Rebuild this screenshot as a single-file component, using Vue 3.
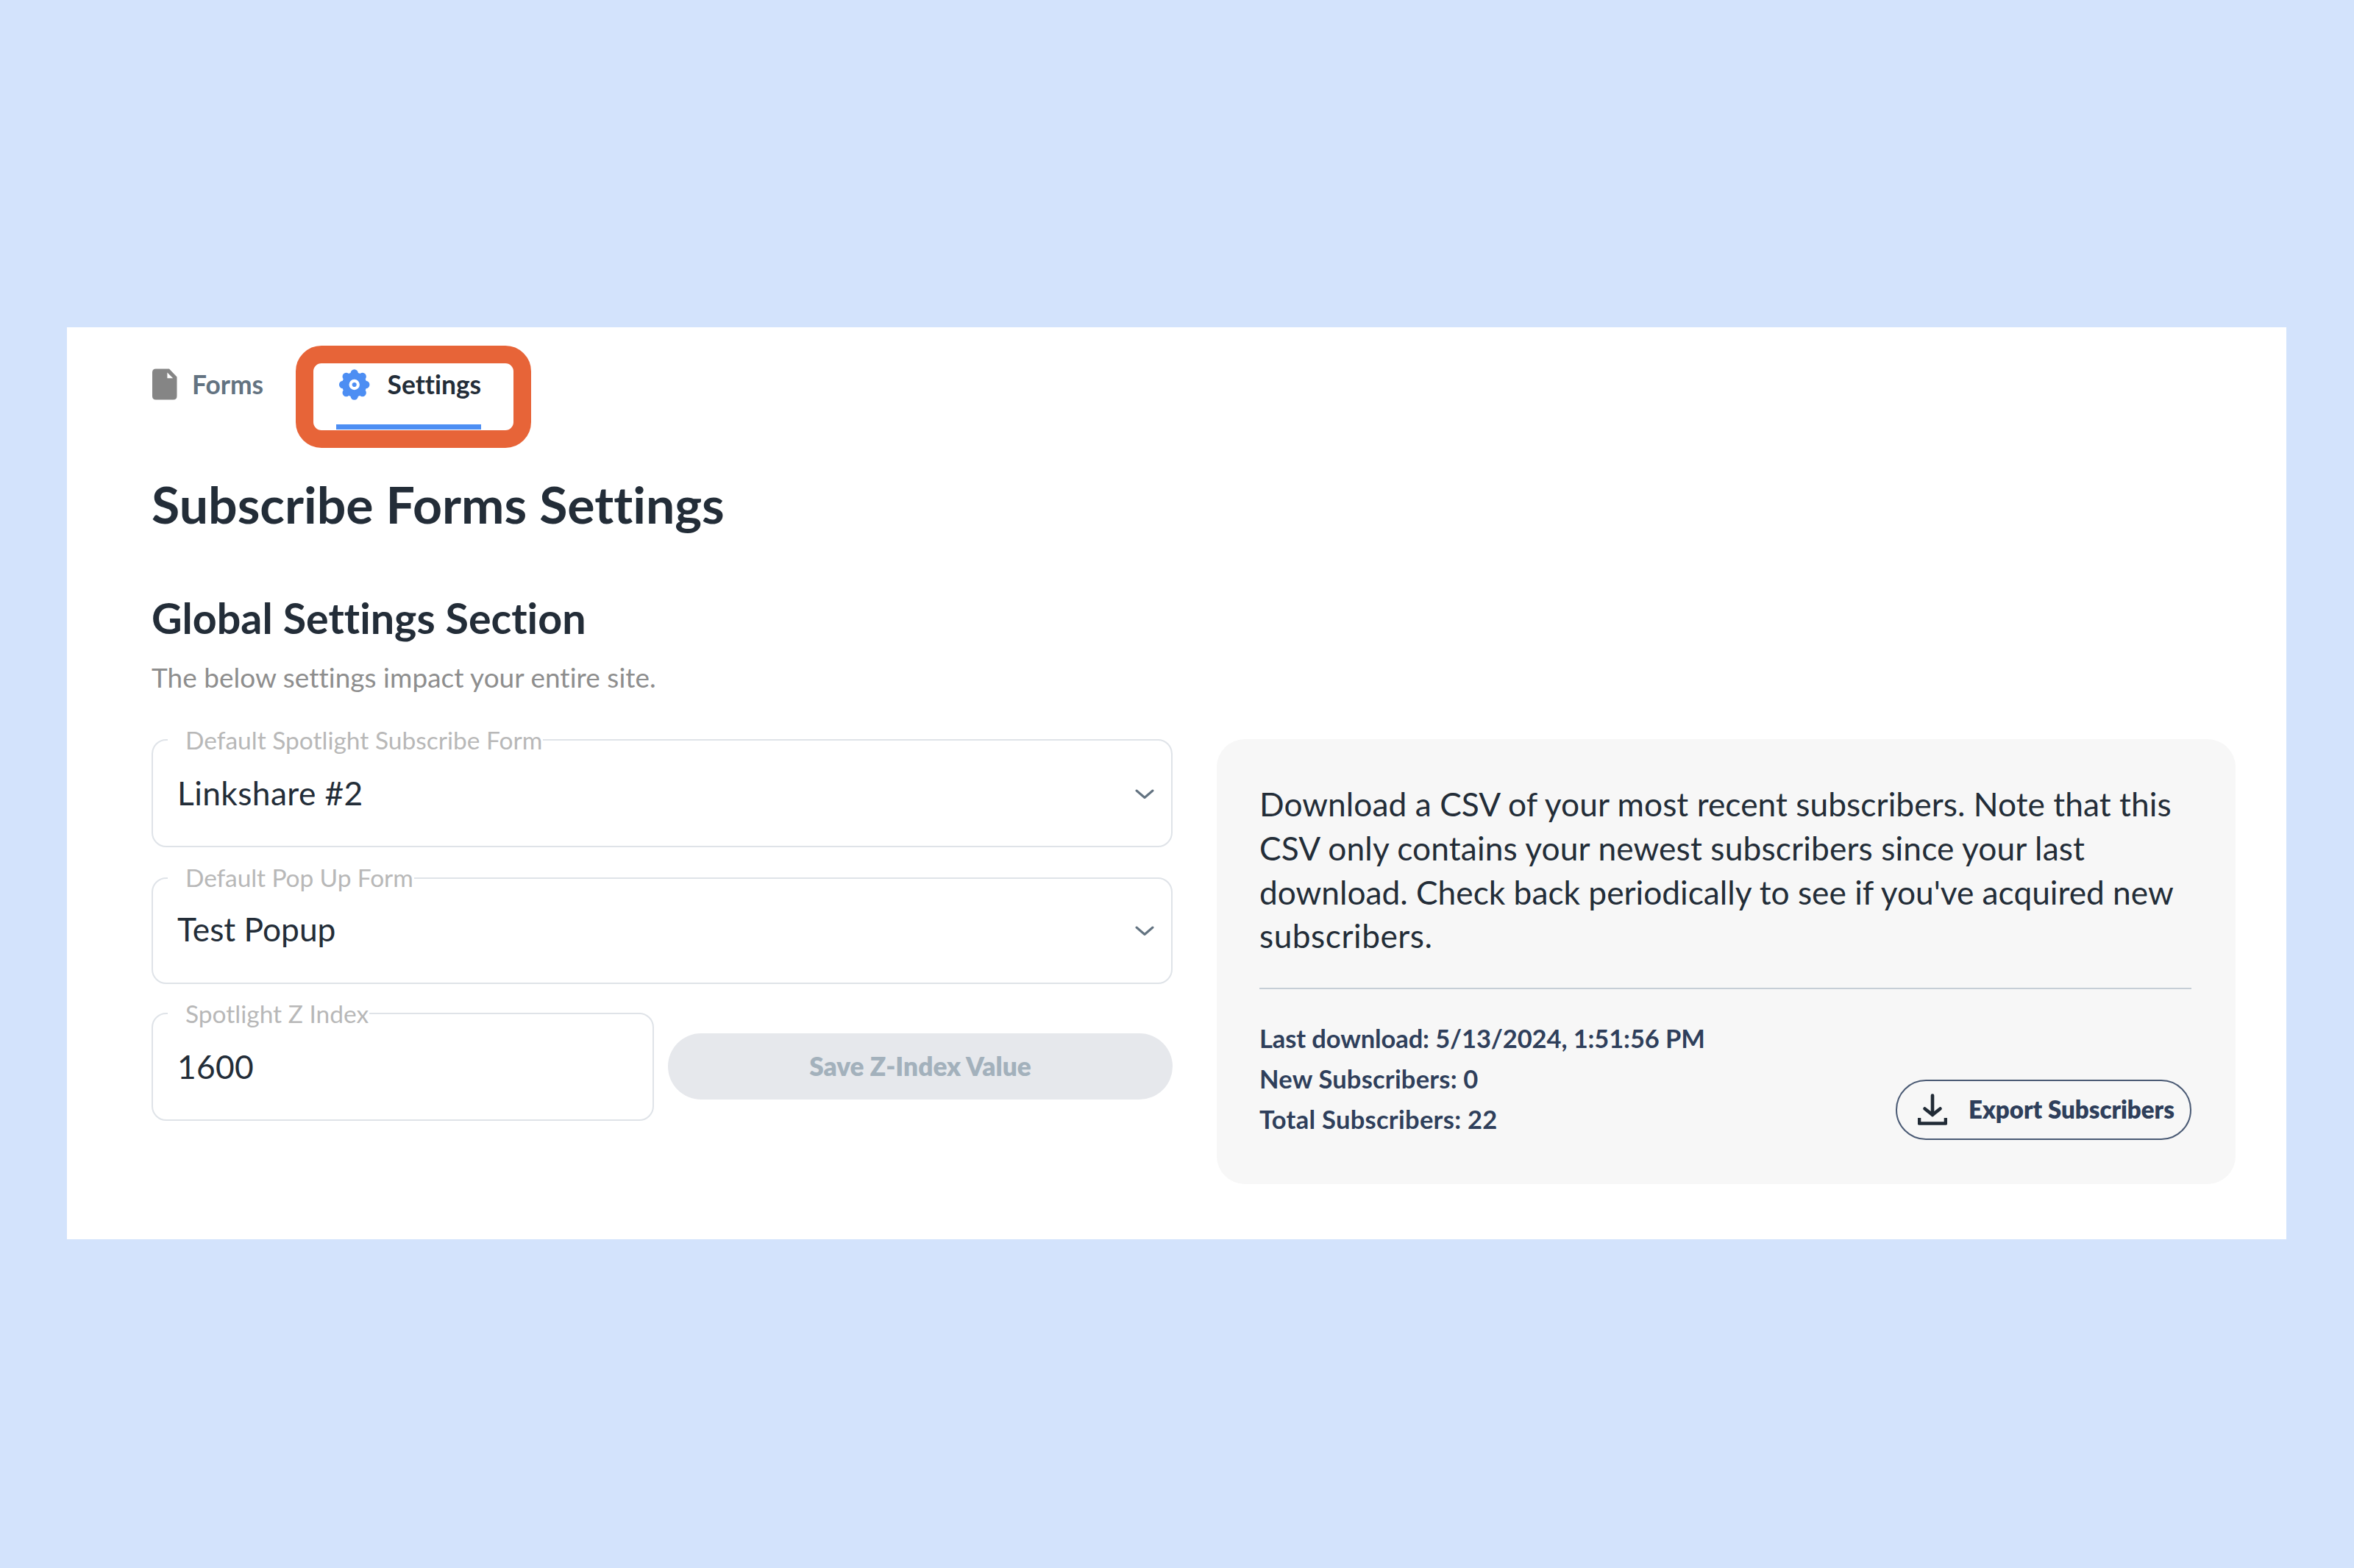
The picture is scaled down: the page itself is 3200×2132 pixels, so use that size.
<script setup>
const stats = [
  { text: 'Last download: 5/13/2024, 1:51:56 PM', tracking: -0.11 },
  { text: 'New Subscribers: 0', tracking: 0.2 },
  { text: 'Total Subscribers: 22', tracking: 0.28 },
]
const about = [
  { text: 'Download a CSV of your most recent subscribers. Note that this', tracking: 0.06 },
  { text: 'CSV only contains your newest subscribers since your last', tracking: 0.14 },
  { text: "download. Check back periodically to see if you've acquired new", tracking: 0 },
  { text: 'subscribers.', tracking: 0.5 },
]
const selects = [
  { label: 'Default Spotlight Subscribe Form', value: 'Linkshare #2', kind: 'spotlight' },
  { label: 'Default Pop Up Form', value: 'Test Popup', kind: 'popup' },
]
const angles = [0, 45, 90, 135, 180, 225, 270, 315]
</script>

<template>
  <div class="page">
    <main class="panel">
      <nav class="tabs">
        <a class="tab">
          <svg class="doc" width="34" height="43" viewBox="0 0 34 43">
            <path
              fill="#858585"
              fill-rule="evenodd"
              d="M5 0.5H23L33.5 11.5V37.5Q33.5 42.5 28.5 42.5H5Q0 42.5 0 37.5V5.5Q0 0.5 5 0.5ZM20.4 5.5V13.2H28.2Z"
            />
          </svg>
          <span>Forms</span>
        </a>
        <a class="tab active">
          <svg class="gear" width="44" height="44" viewBox="-22 -22 44 44">
            <g stroke="#4d8ef3" stroke-width="10.5" stroke-linecap="round">
              <line v-for="a in angles" :key="a" x1="0" y1="-10" x2="0" y2="-15.8" :transform="`rotate(${a})`" />
            </g>
            <circle r="17" fill="#4d8ef3" />
            <circle r="5.2" fill="none" stroke="#fff" stroke-width="4.2" />
          </svg>
          <span>Settings</span>
          <i class="highlight"></i>
        </a>
      </nav>

      <h1>Subscribe Forms Settings</h1>
      <h2>Global Settings Section</h2>
      <p class="hint">The below settings impact your entire site.</p>

      <div class="columns">
        <section class="fields">
          <div v-for="s in selects" :key="s.kind" class="field" :class="s.kind">
            <label>{{ s.label }}</label>
            <span class="value">{{ s.value }}</span>
            <svg class="chevron" width="26" height="15" viewBox="0 0 26 15">
              <path d="M2 2L13 11.5L24 2" fill="none" stroke="#637381" stroke-width="3" stroke-linecap="round" stroke-linejoin="round" />
            </svg>
          </div>
          <div class="zrow">
            <div class="field zindex">
              <label>Spotlight Z Index</label>
              <span class="value">1600</span>
            </div>
            <button class="save">Save Z-Index Value</button>
          </div>
        </section>

        <section class="card">
          <div class="about">
            <div v-for="line in about" :key="line.text" :style="{ letterSpacing: line.tracking + 'px' }">{{ line.text }}</div>
          </div>
          <hr />
          <div class="summary">
            <div class="stats">
              <div v-for="line in stats" :key="line.text" :style="{ letterSpacing: line.tracking + 'px' }">{{ line.text }}</div>
            </div>
            <button class="export">
              <svg width="40" height="44" viewBox="0 0 40 44">
                <g fill="none" stroke="#212b36">
                  <path d="M20 2.5V29M9.5 20.5L20 28.8L30.5 20.5" stroke-width="4.6" stroke-linecap="round" />
                  <path d="M2 33V40.5H38V33" stroke-width="4.6" stroke-linejoin="round" />
                </g>
              </svg>
              <span>Export Subscribers</span>
            </button>
          </div>
        </section>
      </div>
    </main>
  </div>
</template>

<style>
body {
  margin: 0;
}
</style>

<style scoped>
.page {
  box-sizing: border-box;
  width: 3200px;
  height: 2132px;
  padding: 445px 92px 0 91px;
  background: #d3e3fc;
  font-family: Lato, sans-serif;
  font-variant-ligatures: none;
  color: #232d38;
  overflow: hidden;
}
.panel {
  box-sizing: border-box;
  height: 1240px;
  padding: 47px 69px 0 115px;
  background: #fff;
}
.tabs {
  display: flex;
  gap: 100px;
  height: 92px;
}
.tab {
  position: relative;
  box-sizing: border-box;
  display: flex;
  align-items: flex-start;
  font-size: 35.4px;
  font-weight: 700;
  line-height: 62px;
  color: #637381;
}
.tab .doc {
  margin: 9px 20px 0 1px;
}
.tab .gear {
  margin: 9px 23px 0 3px;
}
.tab.active {
  width: 197px;
  margin-left: -1px;
  color: #232d38;
  border-bottom: 7px solid #4d8ef3;
}
.highlight {
  position: absolute;
  left: -55px;
  top: -22px;
  box-sizing: border-box;
  width: 320px;
  height: 139px;
  border: 24px solid #e76438;
  border-radius: 35px;
}
h1 {
  margin: 59px 0 0;
  font-size: 69.8px;
  line-height: 84px;
  font-weight: 700;
}
h2 {
  margin: 78px 0 0;
  font-size: 57.4px;
  line-height: 70px;
  font-weight: 700;
}
.hint {
  margin: 24px 0 0;
  font-size: 36.9px;
  line-height: 44px;
  letter-spacing: 0.06px;
  color: #8e8e8e;
}
.columns {
  display: flex;
  align-items: flex-start;
  gap: 60px;
  margin-top: 62px;
}
.fields {
  width: 1388px;
}
.field {
  position: relative;
  box-sizing: border-box;
  display: flex;
  align-items: center;
  justify-content: space-between;
  height: 147px;
  padding: 0 23px 2px 33px;
  border: 2px solid #dfe3e8;
  border-radius: 20px;
}
.field label {
  position: absolute;
  left: 20px;
  top: -21px;
  padding: 0 1px 0 24px;
  background: #fff;
  font-size: 33.5px;
  line-height: 40px;
  color: #b8b8b8;
}
.value {
  font-size: 44.3px;
  line-height: 54px;
}
.spotlight .value {
  letter-spacing: 0.4px;
}
.field.popup {
  height: 145px;
  margin-top: 41px;
  padding-bottom: 5px;
}
.popup label {
  top: -22px;
  letter-spacing: -0.1px;
}
.zindex .value {
  letter-spacing: 0.3px;
}
.chevron {
  margin-top: 6px;
}
.zrow {
  display: flex;
  align-items: center;
  gap: 19px;
  margin-top: 39px;
}
.zindex {
  width: 683px;
}
button {
  box-sizing: border-box;
  font-family: inherit;
  font-variant-ligatures: none;
  font-weight: 800;
}
.save {
  flex: 1;
  height: 90px;
  margin-top: -1px;
  padding: 0 0 2px;
  border: 0;
  border-radius: 45px;
  background: #e6e8ec;
  color: #a3b1bc;
  font-size: 35.25px;
}
.card {
  box-sizing: border-box;
  width: 1385px;
  height: 605px;
  padding: 58px 60px 0 58px;
  border-radius: 38px;
  background: #f7f7f7;
}
.about {
  font-size: 44.25px;
  line-height: 59.8px;
  white-space: nowrap;
}
hr {
  height: 2px;
  margin: 41px 0 0;
  border: 0;
  background: #c6ced6;
}
.summary {
  display: flex;
  align-items: flex-end;
  justify-content: space-between;
  height: 205px;
}
.stats {
  align-self: flex-start;
  margin-top: 39px;
  font-size: 34.5px;
  font-weight: 700;
  line-height: 55px;
  color: #2f3f5b;
}
.export {
  display: flex;
  align-items: center;
  width: 402px;
  height: 82px;
  padding: 0 0 0 28px;
  border: 2px solid #4a5a74;
  border-radius: 41px;
  background: transparent;
  color: #2f3f5b;
  font-size: 33px;
}
.export span {
  margin: -2px 0 0 29px;
  white-space: nowrap;
}
</style>
